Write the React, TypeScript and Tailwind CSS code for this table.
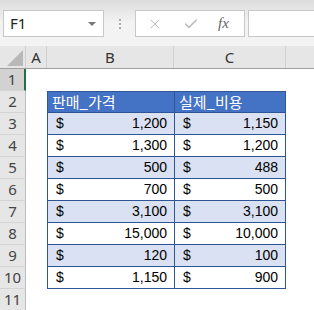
import { X, Check } from "lucide-react"

const rows = [
  { b: "1,200", c: "1,150" },
  { b: "1,300", c: "1,200" },
  { b: "500", c: "488" },
  { b: "700", c: "500" },
  { b: "3,100", c: "3,100" },
  { b: "15,000", c: "10,000" },
  { b: "120", c: "100" },
  { b: "1,150", c: "900" },
]

const ui = { fontFamily: '"Noto Sans", "Open Sans", sans-serif' }
const cell = { fontFamily: '"Liberation Sans", Arial, sans-serif' }
const kr = { fontFamily: '"Noto Sans CJK KR", "Noto Sans", sans-serif' }

function RowHead({ n, active }: { n: number; active?: boolean }) {
  return (
    <div
      className={`w-[26px] h-[22px] shrink-0 flex items-center justify-center text-[15px] text-[#444] border-b border-[#d4d4d4] ${
        active ? "bg-[#d2d2d2] border-r-2 border-r-[#217346]" : "bg-[#e6e6e6] border-r border-r-[#bdbdbd]"
      }`}
      style={ui}
    >
      {n}
    </div>
  )
}

function Money({ v, w, shaded, last }: { v: string; w: string; shaded: boolean; last?: boolean }) {
  return (
    <div
      className={`${w} h-[22px] shrink-0 flex items-center justify-between pl-[8px] pr-[7px] text-[14px] text-black border-l border-b border-[#2f5597] ${
        shaded ? "bg-[#d9e1f2]" : "bg-white"
      } ${last ? "border-r" : ""}`}
      style={cell}
    >
      <span>$</span>
      <span>{v}</span>
    </div>
  )
}

export default function App() {
  return (
    <div className="w-[314px] h-[310px] overflow-hidden bg-white">
      {/* formula bar */}
      <div className="h-[46px] bg-gradient-to-b from-[#dcdcdc] via-[#f3f3f3] to-[#f3f3f3] flex items-start pt-[10px] pl-[3px]">
        <div className="w-[101px] h-[27px] bg-white border border-[#c8c8c8] flex items-center justify-between pl-[6px] pr-[7px]">
          <span className="text-[15px] text-[#222]" style={ui}>F1</span>
          <span className="w-0 h-0 border-l-[4px] border-r-[4px] border-t-[4px] border-l-transparent border-r-transparent border-t-[#777]" />
        </div>
        <div className="w-[31px] h-[27px] flex flex-col items-center justify-center gap-[2px]">
          <span className="w-[2px] h-[2px] bg-[#aaa]" />
          <span className="w-[2px] h-[2px] bg-[#aaa]" />
          <span className="w-[2px] h-[2px] bg-[#aaa]" />
        </div>
        <div className="w-[110px] h-[27px] bg-white border border-[#c8c8c8] flex items-center pl-[11px]">
          <X className="w-[16px] h-[16px] text-[#bdbdbd]" strokeWidth={1.5} />
          <Check className="w-[16px] h-[16px] text-[#bdbdbd] ml-[20px]" strokeWidth={2.4} />
          <span className="ml-[19px] text-[15px] italic text-[#666]" style={{ fontFamily: '"Liberation Serif", serif' }}>
            fx
          </span>
        </div>
        <div className="ml-[3px] flex-1 h-[27px] bg-white border border-[#c8c8c8] border-r-0" />
      </div>

      {/* column headers */}
      <div className="h-[23px] flex bg-[#e6e6e6] border-b border-[#9e9e9e] text-[15px] text-[#333]" style={ui}>
        <div className="w-[26px] shrink-0 border-r border-[#d0d0d0] flex items-end justify-end pr-[2px] pb-[2px]">
          <span className="w-0 h-0 border-b-[16px] border-l-[16px] border-l-transparent border-b-[#b8b8b8]" />
        </div>
        <div className="w-[21px] shrink-0 border-r border-[#d0d0d0] flex items-center justify-center">A</div>
        <div className="w-[127px] shrink-0 border-r border-[#d0d0d0] flex items-center justify-center">B</div>
        <div className="w-[112px] shrink-0 border-r border-[#d0d0d0] flex items-center justify-center">C</div>
        <div className="flex-1" />
      </div>

      {/* row 1 */}
      <div className="flex">
        <RowHead n={1} active />
        <div className="flex-1 h-[22px]" />
      </div>

      {/* row 2: table header */}
      <div className="flex">
        <RowHead n={2} />
        <div className="w-[21px] shrink-0" />
        <div
          className="w-[127px] h-[22px] shrink-0 bg-[#4472c4] text-white text-[15px] flex items-center pl-[4px] border-l border-b border-t border-[#2f5597]"
          style={kr}
        >
          판매_가격
        </div>
        <div
          className="w-[112px] h-[22px] shrink-0 bg-[#4472c4] text-white text-[15px] flex items-center pl-[4px] border-l border-r border-b border-t border-[#2f5597]"
          style={kr}
        >
          실제_비용
        </div>
      </div>

      {rows.map((r, i) => (
        <div key={i} className="flex">
          <RowHead n={i + 3} />
          <div className="w-[21px] shrink-0" />
          <Money v={r.b} w="w-[127px]" shaded={i % 2 === 0} />
          <Money v={r.c} w="w-[112px]" shaded={i % 2 === 0} last />
        </div>
      ))}

      {/* row 11 */}
      <div className="flex">
        <RowHead n={11} />
        <div className="flex-1 h-[22px]" />
      </div>
    </div>
  )
}
